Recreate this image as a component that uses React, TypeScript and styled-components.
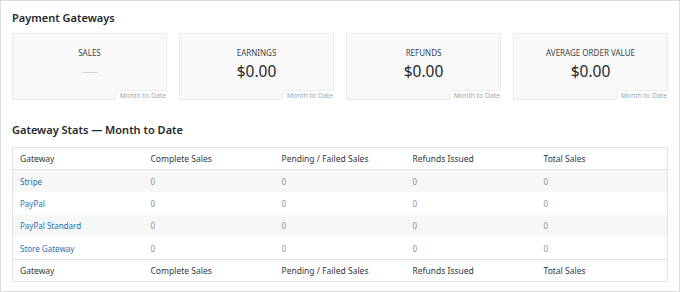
import React from "react";
import styled, { createGlobalStyle } from "styled-components";

const Global = createGlobalStyle`
  html, body { margin: 0; padding: 0; background: #ffffff; }
  body { font-family: "Noto Sans", "Open Sans", sans-serif; color: #23282d; }
  * { box-sizing: border-box; }
`;

const Panel = styled.div`
  width: 680px;
  height: 292px;
  border: 1px solid #dcdcde;
  background: #fff;
  padding: 9px 11px 0 11px;
  display: flex;
  flex-direction: column;
`;

const Heading = styled.h2`
  margin: 0;
  font-size: 11px;
  font-weight: 600;
  line-height: 15px;
  color: #23282d;
`;

const Cards = styled.div`
  display: grid;
  grid-template-columns: repeat(4, 1fr);
  gap: 12px;
  margin-top: 8px;
`;

const Card = styled.div`
  position: relative;
  height: 67px;
  background: #f9f9f9;
  border: 1px solid #ececec;
  text-align: center;
  padding-top: 14px;
`;

const CardLabel = styled.div`
  font-size: 8px;
  line-height: 10px;
  text-transform: uppercase;
  color: #3c434a;
`;

const CardValue = styled.div`
  font-size: 15.5px;
  line-height: 20px;
  margin-top: 3px;
  color: #23282d;
`;

const Dash = styled.div`
  width: 16px;
  height: 1px;
  background: #d5d5d5;
  margin: 14px auto 0;
`;

const Badge = styled.span`
  position: absolute;
  right: -1px;
  bottom: -1px;
  background: #fff;
  border-top: 1px solid #ececec;
  border-left: 1px solid #ececec;
  border-top-left-radius: 4px;
  padding: 0 1px 0 4px;
  font-size: 6.8px;
  line-height: 9px;
  color: #a0a5aa;
`;

const StatsHeading = styled(Heading)`
  margin-top: 22px;
`;

const Table = styled.table`
  margin-top: 10px;
  width: 656px;
  border-collapse: collapse;
  border: 1px solid #e1e1e1;
  table-layout: fixed;
`;

const HeadCell = styled.th<{ $top?: boolean }>`
  text-align: left;
  font-weight: 400;
  font-size: 8.5px;
  color: #32373c;
  height: 22.4px;
  padding: 0 7px;
  ${(p) => (p.$top ? "border-bottom: 1px solid #e1e1e1;" : "border-top: 1px solid #e1e1e1;")}
`;

const Row = styled.tr<{ $alt: boolean }>`
  background: ${(p) => (p.$alt ? "#f6f7f7" : "#fff")};
`;

const Cell = styled.td`
  font-size: 8px;
  color: #8c8f94;
  height: 22.4px;
  padding: 0 7px;
`;

const GatewayLink = styled.a`
  color: #2271b1;
  text-decoration: none;
  font-size: 8px;
`;

const cards = [
  { label: "Sales", value: null },
  { label: "Earnings", value: "$0.00" },
  { label: "Refunds", value: "$0.00" },
  { label: "Average Order Value", value: "$0.00" },
];

const columns = ["Gateway", "Complete Sales", "Pending / Failed Sales", "Refunds Issued", "Total Sales"];
const gateways = ["Stripe", "PayPal", "PayPal Standard", "Store Gateway"];

export default function App() {
  return (
    <>
      <Global />
      <Panel>
        <Heading>Payment Gateways</Heading>
        <Cards>
          {cards.map((c) => (
            <Card key={c.label}>
              <CardLabel>{c.label}</CardLabel>
              {c.value ? <CardValue>{c.value}</CardValue> : <Dash />}
              <Badge>Month to Date</Badge>
            </Card>
          ))}
        </Cards>
        <StatsHeading>Gateway Stats — Month to Date</StatsHeading>
        <Table>
          <thead>
            <tr>
              {columns.map((c) => (
                <HeadCell key={c} $top>
                  {c}
                </HeadCell>
              ))}
            </tr>
          </thead>
          <tbody>
            {gateways.map((g, i) => (
              <Row key={g} $alt={i % 2 === 0}>
                <Cell>
                  <GatewayLink href="#">{g}</GatewayLink>
                </Cell>
                <Cell>0</Cell>
                <Cell>0</Cell>
                <Cell>0</Cell>
                <Cell>0</Cell>
              </Row>
            ))}
          </tbody>
          <tfoot>
            <tr>
              {columns.map((c) => (
                <HeadCell key={c}>{c}</HeadCell>
              ))}
            </tr>
          </tfoot>
        </Table>
      </Panel>
    </>
  );
}
